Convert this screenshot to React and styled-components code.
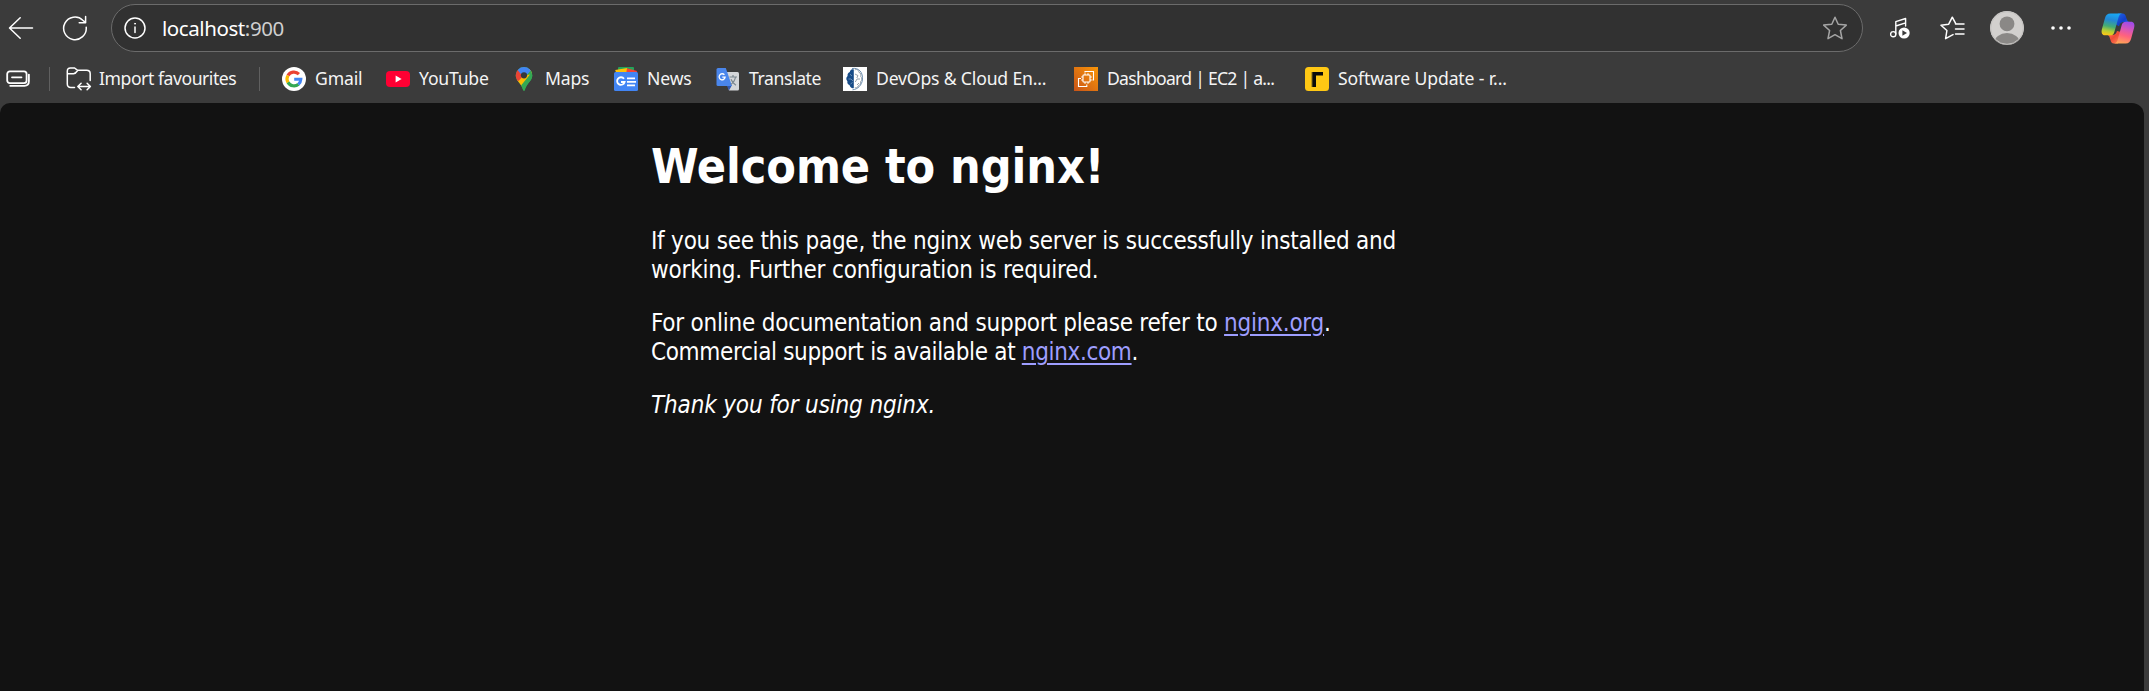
import React from "react";
import styled, { createGlobalStyle } from "styled-components";

const Global = createGlobalStyle`
  * { box-sizing: border-box; }
  html, body { margin: 0; padding: 0; background: #3b3b3b; }
  body { overflow: hidden; }
  svg { display: block; flex: none; }
`;

const Browser = styled.div`
  width: 2149px;
  height: 691px;
  display: flex;
  flex-direction: column;
  background: #3b3b3b;
  color: #fff;
  font-family: "Noto Sans", "Open Sans", sans-serif;
`;

const Toolbar = styled.header`
  height: 56px;
  display: flex;
  align-items: center;
  padding-left: 8px;
`;

const ToolButton = styled.button`
  display: flex;
  align-items: center;
  justify-content: center;
  flex: none;
  width: ${(p) => p.$size}px;
  height: ${(p) => p.$size}px;
  margin: 0 0 0 ${(p) => p.$gap || 0}px;
  padding: 0;
  border: 0;
  background: none;
  color: ${(p) => p.$color || "#fff"};
`;

const AddressBar = styled.div`
  width: 1752px;
  height: 48px;
  margin-left: 23px;
  padding: 0 15px 0 12px;
  display: flex;
  align-items: center;
  border: 1px solid #6b6b6b;
  border-radius: 24px;
  background: #313131;
`;

const Url = styled.span`
  flex: 1;
  margin-left: 16px;
  font-size: 20.5px;
  line-height: 28px;
  letter-spacing: ${(p) => p.$track}px;
  color: #fff;
`;

const Port = styled.span`
  color: #cfcfcf;
`;

const Favourites = styled.nav`
  height: 47px;
  display: flex;
  align-items: center;
  padding: 0 0 1px 6px;
`;

const Divider = styled.span`
  flex: none;
  width: 1px;
  height: 24px;
  margin: 0 ${(p) => p.$after}px 0 ${(p) => p.$before}px;
  background: #606060;
`;

const Favourite = styled.a`
  flex: none;
  width: ${(p) => p.$width}px;
  display: flex;
  align-items: center;
  gap: ${(p) => p.$gap || 9}px;
`;

const Label = styled.span`
  margin-bottom: 2px;
  font-size: 17.6px;
  line-height: 24px;
  letter-spacing: ${(p) => p.$track || 0}px;
  white-space: nowrap;
  color: #f4f4f4;
`;

const Page = styled.main`
  flex: 1;
  width: 2144px;
  background: #121212;
  border-radius: 10px 12px 0 0;
  overflow: hidden;
`;

const Article = styled.article`
  width: 842px;
  margin: 0 auto;
  padding: 34px 0 0;
  font-family: "DejaVu Sans Condensed", "DejaVu Sans", sans-serif;
  font-stretch: condensed;
  font-size: 24px;
  line-height: 29px;
`;

const Title = styled.h1`
  margin: 0 0 32px;
  font-size: 48px;
  line-height: 58px;
  letter-spacing: ${(p) => p.$track}px;
`;

const Paragraph = styled.p`
  margin: 0 0 24px;
`;

const Line = styled.span`
  display: block;
  white-space: nowrap;
  letter-spacing: ${(p) => p.$track || 0}px;
`;

const Link = styled.a`
  color: #9e9eff;
  text-decoration: underline;
  text-decoration-thickness: 2px;
  text-underline-offset: 3px;
`;

const stroke = { fill: "none", stroke: "currentColor", strokeLinecap: "round", strokeLinejoin: "round" };
const starPath = "M12 1.3 L15.2 8.2 L23.3 9.1 L17.4 14.5 L19 22.7 L12 18.7 L5 22.7 L6.6 14.5 L.7 9.1 L8.8 8.2Z";

const BackIcon = () => (
  <svg width="26" height="24" viewBox="0 0 26 24" {...stroke} strokeWidth="1.5">
    <path d="M24.5 12H1.8M12.2 1.8L1.5 12L12.2 22.2" />
  </svg>
);

const ReloadIcon = () => (
  <svg width="26" height="26" viewBox="0 0 26 26" {...stroke} strokeWidth="1.5">
    <path d="M24.2 12.2A11.3 11.3 0 1 1 20.8 5.2L23.6 7.6M23.6 1.6V7.8H17.2" />
  </svg>
);

const InfoIcon = () => (
  <svg width="22" height="22" viewBox="0 0 22 22" {...stroke} strokeWidth="1.5">
    <circle cx="11" cy="11" r="10" />
    <path d="M11 10v5.5" />
    <circle cx="11" cy="6.7" r=".5" fill="currentColor" strokeWidth="1" />
  </svg>
);

const StarIcon = () => (
  <svg width="24" height="24" viewBox="0 0 24 24" {...stroke} strokeWidth="1.5">
    <path d={starPath} />
  </svg>
);

const MediaIcon = () => (
  <svg width="20" height="22" viewBox="0 0 20 22">
    <g {...stroke} strokeWidth="1.4">
      <circle cx="3.2" cy="17.2" r="2.6" />
      <path d="M5.8 17V4.7L15.6 1.5V9M5.8 9L15.6 5.8" />
    </g>
    <circle cx="14.1" cy="16" r="5.6" fill="#fff" />
    <path d="M12.4 13.2v5.6l4.6-2.8z" fill="#3b3b3b" />
  </svg>
);

const FavouritesIcon = () => (
  <svg width="25" height="24" viewBox="0 0 25 24" {...stroke} strokeWidth="1.5">
    <path d="M13 18.6L5.6 22.6L6.9 14.5L1 9.3L8.7 8.2L12.3 1.2L15.6 7.3M15.5 7.9H24M15.5 12.9H24M15.5 17.9H24" />
  </svg>
);

const AvatarIcon = () => (
  <svg width="34" height="34" viewBox="0 0 34 34">
    <defs>
      <clipPath id="avatar-clip"><circle cx="17" cy="17" r="17" /></clipPath>
    </defs>
    <g clipPath="url(#avatar-clip)">
      <rect width="34" height="34" fill="#d2d0ce" />
      <circle cx="17" cy="12.8" r="7.4" fill="#8a8886" />
      <ellipse cx="17" cy="32" rx="12.8" ry="10" fill="#8a8886" />
    </g>
    <circle cx="17" cy="17" r="16.3" fill="none" stroke="#c4c2c0" strokeWidth="1" />
  </svg>
);

const MoreIcon = () => (
  <svg width="20" height="6" viewBox="0 0 20 6" fill="#fff">
    <circle cx="2" cy="3" r="1.8" /><circle cx="10" cy="3" r="1.8" /><circle cx="18" cy="3" r="1.8" />
  </svg>
);

const CopilotIcon = () => (
  <svg width="34" height="31" viewBox="0 0 34 31">
    <defs>
      <linearGradient id="cp-left" x1=".55" y1="0" x2=".35" y2="1">
        <stop offset="0" stopColor="#18a8f4" /><stop offset=".3" stopColor="#2487d4" />
        <stop offset=".6" stopColor="#44ac74" /><stop offset=".82" stopColor="#b5ce35" /><stop offset="1" stopColor="#f8c818" />
      </linearGradient>
      <linearGradient id="cp-top" x1="0" y1="0" x2="1" y2="1">
        <stop offset="0" stopColor="#2468e8" /><stop offset=".55" stopColor="#123fca" /><stop offset="1" stopColor="#2578f0" />
      </linearGradient>
      <linearGradient id="cp-right" x1=".6" y1="0" x2=".35" y2="1">
        <stop offset="0" stopColor="#a04be9" /><stop offset=".35" stopColor="#d957b4" />
        <stop offset=".62" stopColor="#ff627e" /><stop offset="1" stopColor="#ffa557" />
      </linearGradient>
      <linearGradient id="cp-bottom" x1="0" y1="0" x2="1" y2="1">
        <stop offset="0" stopColor="#ff8852" /><stop offset=".5" stopColor="#ef4938" /><stop offset="1" stopColor="#ff945a" />
      </linearGradient>
    </defs>
    <path d="M17 .5H21.5C23.8 .5 24.4 1.8 25 4L26.1 7C26.5 8.3 27.4 9 29 9H23.3C20.4 9 18.8 10.4 18 13.2L14 11Z" fill="url(#cp-top)" />
    <path d="M17 30.5H13C10.6 30.5 10 29 9.4 26.7L8.4 23.7C8 22.5 7.2 22 5.7 22H11C14 22 15.2 20.7 16 18L20 19Z" fill="url(#cp-bottom)" />
    <path d="M9.5 .5H21.3C18.7 .7 18 2.6 17.2 5.4L13.5 18.4C12.8 21 11.8 22.3 9.2 22.3H4.2C1.1 22.3 0 19.8 .9 16.2L4 5C4.9 2 6.3 .5 9.5 .5Z" fill="url(#cp-left)" />
    <path d="M24.7 30.5H13C15.4 30.3 16.3 28.5 17 25.8L20.6 12.6C21.3 9.8 22.4 8.7 25 8.7H29.8C33 8.7 34 11.3 33.1 14.8L30.1 25.8C29.2 29 27.8 30.5 24.7 30.5Z" fill="url(#cp-right)" />
  </svg>
);

const TabsIcon = () => (
  <svg width="24" height="18" viewBox="0 0 24 18" {...stroke} strokeWidth="1.8">
    <rect x="1.2" y="1.4" width="19.4" height="11.8" rx="2.6" />
    <path d="M6 7.3H15.5M22.9 4.6V11.3C22.9 14.2 21.3 15.8 18.4 15.8H4.2" />
  </svg>
);

const ImportIcon = () => (
  <svg width="26" height="24" viewBox="0 0 26 24" {...stroke} strokeWidth="1.5">
    <path d="M8.5 20.4H4.8C2.6 20.4 1.3 19.1 1.3 17V4.3C1.3 2.2 2.4 1 4.4 1H8.6L11.6 3.3H20.6C22.8 3.3 24.2 4.5 24.2 6.7V13.4M1.4 6.7H7.5C9.5 6.7 10.4 5.4 11.6 3.5" />
    <path d="M12.1 19.5H24.4M15.1 16.2L11.8 19.5L15.1 22.8M21.1 16.2L24.4 19.5L21.1 22.8" />
  </svg>
);

const GoogleIcon = () => (
  <svg width="24" height="24" viewBox="0 0 24 24">
    <circle cx="12" cy="12" r="12" fill="#fff" />
    <g fill="none" strokeWidth="3.2">
      <path d="M6 8.5A6.9 6.9 0 0 1 16.9 7.1" stroke="#ea4335" />
      <path d="M6 15.5A6.9 6.9 0 0 1 6 8.5" stroke="#fbbc05" />
      <path d="M16.5 17.2A6.9 6.9 0 0 1 6 15.4" stroke="#34a853" />
      <path d="M12.2 12.3H18.9A6.9 6.9 0 0 1 16.4 17.3" stroke="#4285f4" strokeWidth="3" />
    </g>
  </svg>
);

const YouTubeIcon = () => (
  <svg width="24" height="24" viewBox="0 0 24 24">
    <rect y="4" width="24" height="16" rx="4" fill="#ff0033" />
    <path d="M9.6 8.6V15.4L15.6 12Z" fill="#fff" />
  </svg>
);

const MapsIcon = () => (
  <svg width="24" height="24" viewBox="0 0 24 24">
    <defs>
      <clipPath id="pin-clip"><path d="M12 0A8.3 8.3 0 0 1 20.3 8.3C20.3 14 15 15.5 13 22.7C12.7 24.3 11.3 24.3 11 22.7C9 15.5 3.7 14 3.7 8.3A8.3 8.3 0 0 1 12 0Z" /></clipPath>
    </defs>
    <g clipPath="url(#pin-clip)">
      <rect width="24" height="24" fill="#34a853" />
      <path d="M4 13L12 8.4L17.8 1.5L21 6L8.5 20.5L4 17Z" fill="#fbbc04" />
      <path d="M12 8.3L18.8 3L24 6V16L10 23L9 18.4L18 7.4Z" fill="#34a853" />
      <path d="M0 0L7 3L12 8.3L5.2 15.3L0 10Z" fill="#ea4335" />
      <path d="M5.6 3L9 -1H16L18.8 3.6L12 11Z" fill="#4285f4" />
    </g>
    <circle cx="12" cy="8.3" r="3.1" fill="#34383c" />
  </svg>
);

const NewsIcon = () => (
  <svg width="24" height="24" viewBox="0 0 24 24">
    <rect x="4" width="16" height="7" rx="1" fill="#25a35a" />
    <path d="M1.2 3.1L13 1L15 7H2.5Z" fill="#ffc107" />
    <path d="M13 1.3L23 4L22 8H12Z" fill="#f44336" />
    <rect y="5" width="24" height="19" rx="1.5" fill="#4285f4" />
    <g fill="none" stroke="#fff" strokeWidth="1.8">
      <path d="M10 11.8A3.8 3.8 0 1 0 10.6 15H7M13 11.3H21M13 14.8H22M13 18.3H21" />
    </g>
  </svg>
);

const TranslateIcon = () => (
  <svg width="24" height="24" viewBox="0 0 24 24">
    <path d="M8 5H21.5Q23 5 23 6.5V22Q23 23.5 21.5 23.5H13Z" fill="#d4d6d9" />
    <path d="M10.5 18H16L13 23.5Z" fill="#3158b0" />
    <path d="M2 1H9.8L16 19H2Q.5 19 .5 17.5V2.5Q.5 1 2 1Z" fill="#4a86ec" />
    <path d="M8.4 7.8A3 3 0 1 0 9.1 10.2H6.3" fill="none" stroke="#fff" strokeWidth="1.3" />
    <path d="M13.5 10H21M17 8V10M19.5 10C19 13 17 16 14.8 17.5M15 12.2C16 15 18 17 20 18.2" fill="none" stroke="#7b8790" strokeWidth="1.2" />
  </svg>
);

const BrainIcon = () => (
  <svg width="24" height="24" viewBox="0 0 24 24">
    <rect width="24" height="24" fill="#fff" />
    <path d="M10.8 2.6C8.5 1.5 7 3.5 6.8 5C4.8 5.8 4.3 7.5 4.6 9C2.8 10.5 3 13 4.4 14.2C4 16 5 17.5 6.5 18C7 20.5 9.2 21.8 10.8 21Z" fill="#174b87" />
    <path d="M7 7.2L9 9M5.5 12H8L10 14M7.5 17L9.5 15.5" fill="none" stroke="#8ba7c6" strokeWidth=".7" />
    <path d="M11.8 3C14.4 1.4 16 4 15.8 5.2C18 6 18.2 8 17.6 9.3C19.4 11 19 13.5 17.6 14.5C18 17 16.7 18.2 15.5 18.5C14.8 21 12.8 21 11.8 20.5M12 7L15 8.6L13.8 11M17 12H14L12.3 15M14 18L16 16" fill="none" stroke="#8b96a2" strokeWidth=".9" />
    <path d="M9 1.5C16 .4 20.3 5.5 19.4 13C18.8 18 15 22.3 9.5 22.8" fill="none" stroke="#5e82a7" strokeWidth=".9" />
  </svg>
);

const Ec2Icon = () => (
  <svg width="24" height="24" viewBox="0 0 24 24">
    <defs>
      <linearGradient id="ec2-bg" x1="0" y1="1" x2="1" y2="0"><stop stopColor="#c85418" /><stop offset="1" stopColor="#fa9608" /></linearGradient>
    </defs>
    <rect width="24" height="24" fill="url(#ec2-bg)" />
    <g fill="none" stroke="#fff" strokeWidth="1.1">
      <rect x="9" y="8" width="7" height="7" rx=".5" />
      <path d="M11 6.2V8M14 6.2V8M11 15V16.8M14 15V16.8M7.2 10H9M7.2 13H9M16 10H17.8M16 13H17.8" />
      <path d="M11 5.5V4.5H19.5V13H18.5M7 11.5H4.5V19.5H12.8V17.5" />
    </g>
  </svg>
);

const UpdateIcon = () => (
  <svg width="24" height="24" viewBox="0 0 24 24">
    <rect width="24" height="24" rx="3.5" fill="#ffc814" />
    <path d="M7 5H18V8.5H11V20H7Z" fill="#0b0b0b" />
    <path d="M7 5V20" stroke="#806818" strokeWidth="1" />
  </svg>
);

const favourites = [
  { text: "Gmail", Icon: GoogleIcon, width: 104, track: -0.15 },
  { text: "YouTube", Icon: YouTubeIcon, width: 126, track: -0.2 },
  { text: "Maps", Icon: MapsIcon, width: 102, track: -0.2 },
  { text: "News", Icon: NewsIcon, width: 102, track: -0.15 },
  { text: "Translate", Icon: TranslateIcon, width: 127, track: -0.4 },
  { text: "DevOps & Cloud En...", Icon: BrainIcon, width: 231, track: -0.17 },
  { text: "Dashboard | EC2 | a...", Icon: Ec2Icon, width: 231, track: -0.75 },
  { text: "Software Update - r...", Icon: UpdateIcon, width: 231, track: -0.14 },
];

export default function App() {
  return (
    <Browser>
      <Global />
      <Toolbar>
        <ToolButton $size={26}><BackIcon /></ToolButton>
        <ToolButton $size={26} $gap={28}><ReloadIcon /></ToolButton>
        <AddressBar>
          <InfoIcon />
          <Url $track={-0.42}>localhost<Port>:900</Port></Url>
          <ToolButton $size={24} $color="#a5a5a5"><StarIcon /></ToolButton>
        </AddressBar>
        <ToolButton $size={20} $gap={27}><MediaIcon /></ToolButton>
        <ToolButton $size={25} $gap={30}><FavouritesIcon /></ToolButton>
        <ToolButton $size={34} $gap={25}><AvatarIcon /></ToolButton>
        <ToolButton $size={20} $gap={27}><MoreIcon /></ToolButton>
        <ToolButton $size={34} $gap={30}><CopilotIcon /></ToolButton>
      </Toolbar>
      <Favourites>
        <TabsIcon />
        <Divider $before={19} $after={16} />
        <Favourite $width={170} $gap={7}><ImportIcon /><Label $track={-0.45}>Import favourites</Label></Favourite>
        <Divider $before={23} $after={22} />
        {favourites.map(({ text, Icon, width, track }) => (
          <Favourite key={text} $width={width}><Icon /><Label $track={track}>{text}</Label></Favourite>
        ))}
      </Favourites>
      <Page>
        <Article>
          <Title $track={-0.08}>Welcome to nginx!</Title>
          <Paragraph>
            <Line $track={-0.24}>If you see this page, the nginx web server is successfully installed and</Line>
            <Line $track={-0.19}>working. Further configuration is required.</Line>
          </Paragraph>
          <Paragraph>
            <Line $track={-0.23}>For online documentation and support please refer to <Link>nginx.org</Link>.</Line>
            <Line $track={-0.34}>Commercial support is available at <Link>nginx.com</Link>.</Line>
          </Paragraph>
          <Paragraph><Line as="em" $track={-0.15}>Thank you for using nginx.</Line></Paragraph>
        </Article>
      </Page>
    </Browser>
  );
}
